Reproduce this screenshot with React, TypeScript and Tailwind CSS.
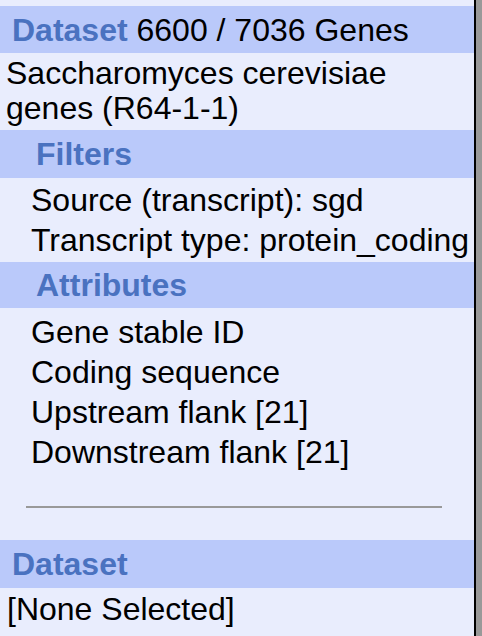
import React from 'react';

const band = 'bg-[#bac9fa] text-[#4a72c0] font-bold';

const SummaryPanel: React.FC = () => {
  const filters = ['Source (transcript): sgd', 'Transcript type: protein_coding'];
  const attributes = ['Gene stable ID', 'Coding sequence', 'Upstream flank [21]', 'Downstream flank [21]'];

  return (
    <div
      className="flex h-[636px] w-[482px] overflow-hidden bg-[#999999] text-[32px] text-black"
      style={{ fontFamily: '"Liberation Sans", Arial, sans-serif' }}
    >
      <div className="flex w-[476px] shrink-0 flex-col border-r-2 border-black bg-[#e9edfd] pt-[6px]">
        {/* Dataset header */}
        <div className={`${band} flex h-[47px] items-center whitespace-pre px-[12px] leading-none`}>
          Dataset <span className="font-normal text-black">6600 / 7036 Genes</span>
        </div>
        <div className="h-[77px] px-[6px] pt-[3px] leading-[35px]">
          Saccharomyces cerevisiae
          <br />
          genes (R64-1-1)
        </div>

        {/* Filters */}
        <div className={`${band} flex h-[48px] items-center pl-[36px] leading-none`}>Filters</div>
        <div className="flex h-[84px] flex-col justify-center whitespace-nowrap pl-[31px] leading-[40px]">
          {filters.map((f) => (
            <div key={f}>{f}</div>
          ))}
        </div>

        {/* Attributes */}
        <div className={`${band} flex h-[46px] items-center pl-[36px] leading-none`}>Attributes</div>
        <div className="flex flex-col pl-[31px] pt-[4px] leading-[40px]">
          {attributes.map((a) => (
            <div key={a}>{a}</div>
          ))}
        </div>

        <div className="mx-[26px] mt-[34px] h-[2px] w-[416px] bg-[#999999]" />

        {/* Dataset (second) */}
        <div className={`${band} mt-[32px] flex h-[48px] items-center px-[12px] leading-none`}>Dataset</div>
        <div className="px-[7px] pt-[4px] leading-[34px]">[None Selected]</div>
      </div>
    </div>
  );
};

export default function App() {
  return <SummaryPanel />;
}
